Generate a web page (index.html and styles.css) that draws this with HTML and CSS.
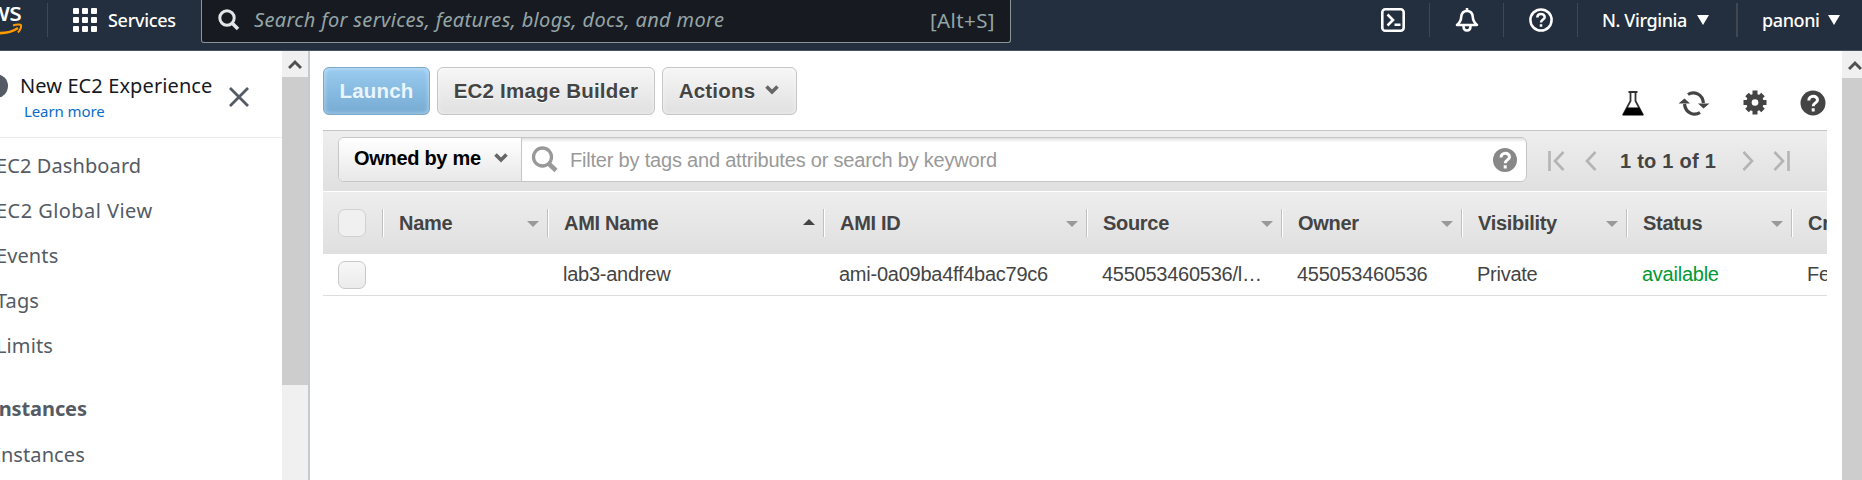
FILE: index.html
```html
<!DOCTYPE html>
<html lang="en">
<head>
<meta charset="utf-8">
<title>EC2 Management Console</title>
<link rel="stylesheet" href="styles.css">
</head>
<body>
<header class="topbar">
  <div class="logo">
    <span class="logo-text">aws</span>
    <svg class="logo-smile" width="44" height="14" viewBox="0 0 44 14"><path d="M0 4C12 12 29 12 39 5" fill="none" stroke="#f90" stroke-width="2.6"/><path d="M34 2.5C38 1 41.500 1.500 42 2.200C42.500 3.500 41.500 7 39 9.500" fill="none" stroke="#f90" stroke-width="2"/></svg>
  </div>
  <div class="services">
    <svg width="24" height="24" viewBox="0 0 24 24" fill="#fff"><rect width="6" height="6" rx="1"/><rect x="9" width="6" height="6" rx="1"/><rect x="18" width="6" height="6" rx="1"/><rect y="9" width="6" height="6" rx="1"/><rect x="9" y="9" width="6" height="6" rx="1"/><rect x="18" y="9" width="6" height="6" rx="1"/><rect y="18" width="6" height="6" rx="1"/><rect x="9" y="18" width="6" height="6" rx="1"/><rect x="18" y="18" width="6" height="6" rx="1"/></svg>
    <span class="services-label">Services</span>
  </div>
  <div class="search">
    <svg width="22" height="22" viewBox="0 0 22 22" fill="none" stroke="#e3e6e6" stroke-width="3"><circle cx="9" cy="9" r="7.200"/><path d="M14 14L20 20" stroke-width="3.600"/></svg>
    <span class="search-hint">Search for services, features, blogs, docs, and more</span>
    <span class="search-key">[Alt+S]</span>
  </div>
  <nav class="tools">
    <span class="tool"><svg width="24" height="24" viewBox="0 0 24 24" fill="none" stroke="#fff" stroke-width="2.600"><rect x="1.300" y="1.300" width="21.400" height="21.400" rx="3"/><path d="M6.500 6.500L12 12L6.500 17.500M13.500 16.800H19.500"/></svg></span>
    <span class="tool"><svg width="24" height="24" viewBox="0 0 24 24" fill="none" stroke="#fff" stroke-width="2.600"><path d="M12 0V3M2 17C5 14.500 6 13 6.200 9C6.500 5 8.500 3 12 3C15.500 3 17.500 5 17.800 9C18 13 19 14.500 22 17Z" stroke-linejoin="round"/><path d="M8.500 18C8.500 24 15.500 24 15.500 18"/></svg></span>
    <span class="tool"><svg width="24" height="24" viewBox="0 0 24 24" fill="none" stroke="#fff" stroke-width="2.500"><circle cx="12" cy="12" r="10.600"/><path d="M8.300 9.500C8.300 4.800 15.700 4.800 15.700 9.200C15.700 11.500 12 11.600 12 14.500M12 16.300V18.800"/></svg></span>
    <span class="menu region"><span class="menu-text region-text">N. Virginia</span><svg width="12" height="10"><path d="M0 0H12L6 10Z" fill="#fff"/></svg></span>
    <span class="menu user"><span class="menu-text user-text">panoni</span><svg width="12" height="10"><path d="M0 0H12L6 10Z" fill="#fff"/></svg></span>
  </nav>
</header>
<div class="workspace">
  <aside class="sidebar">
    <div class="experience">
      <span class="toggle"></span>
      <div class="experience-text"><div class="experience-title">New EC2 Experience</div><a class="learn">Learn more</a></div>
      <svg class="close" width="20" height="20" viewBox="0 0 20 20" stroke="#545b64" stroke-width="2.800"><path d="M1 1L19 19M19 1L1 19"/></svg>
    </div>
    <ul class="nav">
      <li>EC2 Dashboard</li>
      <li class="nav-wide">EC2 Global View</li>
      <li>Events</li>
      <li>Tags</li>
      <li>Limits</li>
      <li class="nav-group">Instances</li>
      <li class="nav-sub">Instances</li>
    </ul>
  </aside>
  <div class="scroll side-scroll">
    <div class="scroll-button"><svg width="14" height="11" viewBox="0 0 14 11"><path d="M1 9L7 3L13 9" fill="none" stroke="#505050" stroke-width="3"/></svg></div>
    <div class="scroll-thumb"></div>
  </div>
  <main class="main">
    <div class="actions">
      <button class="button primary">Launch</button>
      <button class="button builder">EC2 Image Builder</button>
      <button class="button dropdown">Actions <svg width="14" height="10" viewBox="0 0 14 10"><path d="M1.500 1.500L7 7L12.500 1.500" fill="none" stroke="#666" stroke-width="3.600"/></svg></button>
      <div class="utilities">
        <svg width="24" height="26" viewBox="0 0 24 26"><path d="M7.500 2H16.500M9.500 2V11L2.500 24H21.500L14.500 11V2" fill="none" stroke="#333" stroke-width="1.800"/><path d="M6 17.500H18L22.500 25.500H1.500Z"/></svg>
        <svg width="32" height="26" viewBox="0 0 32 26" fill="none" stroke="#444" stroke-width="3.200"><path d="M10 4.500C16 .500 24.500 4 25.500 13M22 22.500C16 26.500 7.500 23 6.500 14"/><path d="M20 13.500H31.500L25.500 18.500ZM.500 13.500H12L6.500 8.500Z" fill="#444" stroke="none"/></svg>
        <svg width="24" height="26" viewBox="0 0 24 26"><g stroke="#444" stroke-width="5"><path d="M12 .500V24.500M.500 12.500H23.500M4 4.500L20 20.500M20 4.500L4 20.500"/></g><circle cx="12" cy="12.500" r="8.700" fill="#444"/><circle cx="12" cy="12.500" r="3.300" fill="#fff"/></svg>
        <svg width="26" height="26" viewBox="0 0 26 26"><circle cx="13" cy="13" r="12.500" fill="#444"/><path d="M8.800 10.500C8.800 5 17.500 5 17.500 10C17.500 13 13.200 12.800 13.200 16.200M13.200 18.200V21.400" fill="none" stroke="#fff" stroke-width="3"/></svg>
      </div>
    </div>
    <section class="panel">
      <div class="filterbar">
        <div class="filter">
          <div class="owner-filter"><span class="owned">Owned by me</span><svg width="14" height="10" viewBox="0 0 14 10"><path d="M1.500 1.500L7 7L12.500 1.500" fill="none" stroke="#666" stroke-width="3.600"/></svg></div>
          <div class="keyword">
            <svg width="28" height="28" viewBox="0 0 28 28" fill="none" stroke="#999"><circle cx="11.500" cy="11" r="9" stroke-width="3.300"/><path d="M17.500 17.500L25 24.500" stroke-width="4.500"/></svg>
            <span class="keyword-hint">Filter by tags and attributes or search by keyword</span>
            <svg class="keyword-help" width="24" height="26" viewBox="0 0 24 26"><circle cx="12" cy="13" r="12" fill="#888"/><path d="M8 10.500C8 5 16.500 5 16.500 10C16.500 13 12.200 12.800 12.200 16.200M12.200 18.200V21.400" fill="none" stroke="#fff" stroke-width="3"/></svg>
          </div>
        </div>
        <div class="pager">
          <svg width="17" height="20" viewBox="0 0 17 20"><path d="M1.500 0V20M15.500 1L7 10L15.500 19"/></svg>
          <svg class="prev" width="12" height="20" viewBox="0 0 12 20"><path d="M10.500 1L2 10L10.500 19"/></svg>
          <span class="count">1 to 1 of 1</span>
          <svg width="12" height="20" viewBox="0 0 12 20"><path d="M1.500 1L10 10L1.500 19"/></svg>
          <svg class="last" width="17" height="20" viewBox="0 0 17 20"><path d="M15.500 0V20M1.500 1L10 10L1.500 19"/></svg>
        </div>
      </div>
      <div class="grid head">
        <div class="check-cell"><span class="check check-all"></span></div>
        <div class="th">Name<i class="sort"></i></div>
        <div class="th">AMI Name<i class="sort up"></i></div>
        <div class="th">AMI ID<i class="sort"></i></div>
        <div class="th">Source<i class="sort"></i></div>
        <div class="th">Owner<i class="sort"></i></div>
        <div class="th">Visibility<i class="sort"></i></div>
        <div class="th">Status<i class="sort"></i></div>
        <div class="th">Creation Date</div>
      </div>
      <div class="grid row">
        <div class="check-cell"><span class="check"></span></div>
        <div class="td"></div>
        <div class="td">lab3-andrew</div>
        <div class="td">ami-0a09ba4ff4bac79c6</div>
        <div class="td">455053460536/l…</div>
        <div class="td">455053460536</div>
        <div class="td">Private</div>
        <div class="td ok">available</div>
        <div class="td">February</div>
      </div>
    </section>
  </main>
  <div class="scroll page-scroll">
    <div class="scroll-button"><svg width="14" height="11" viewBox="0 0 14 11"><path d="M1 9L7 3L13 9" fill="none" stroke="#505050" stroke-width="3"/></svg></div>
    <div class="scroll-thumb"></div>
  </div>
</div>
</body>
</html>
```
FILE: styles.css
```css
* { box-sizing: border-box; }
body { margin: 0; width: 1862px; height: 480px; overflow: hidden; background: #fff; font-family: "Liberation Sans", Arial, sans-serif; }
svg { display: block; flex: none; }

.topbar { display: flex; height: 51px; background: #232f3e; border-bottom: 1px solid #485362; font-family: "Noto Sans", sans-serif; color: #fff; }
.logo { width: 48px; height: 34px; margin-top: 3px; border-right: 1px solid #414750; overflow: hidden; }
.logo-text { display: block; margin-left: -25px; font-size: 26px; font-weight: 500; line-height: 34px; margin-top: -9px; letter-spacing: -0.8px; }
.logo-smile { margin: -5px 0 0 -21px; }
.services { display: flex; align-items: center; height: 40px; width: 153px; padding-left: 25px; }
.services-label { margin: -1px 0 0 11px; font-size: 18px; font-weight: 500; letter-spacing: -0.3px; }
.search { display: flex; align-items: center; width: 810px; height: 43px; padding: 0 15px 3px 16px; background: #171a21; border: 1px solid #869596; border-top: 0; border-radius: 0 0 3px 3px; color: #95a5a6; }
.search-hint { margin-left: 14px; font-size: 20px; font-style: italic; letter-spacing: 0.34px; white-space: nowrap; }
.search-key { margin-left: auto; font-size: 20.5px; letter-spacing: 0.4px; }
.tools { display: flex; height: 34px; margin: 3px 0 0 auto; }
.tool { display: flex; width: 74px; align-items: center; justify-content: center; border-right: 1px solid #414750; }
.menu { display: flex; align-items: center; border-right: 1px solid #414750; }
.menu-text { font-size: 18px; font-weight: 500; white-space: nowrap; }
.region { width: 160px; padding-left: 24px; border-right-width: 2px; }
.region-text { width: 95px; letter-spacing: -0.4px; }
.user { width: 124px; padding-left: 24px; border: 0; }
.user-text { width: 66px; letter-spacing: -0.4px; }

.workspace { display: flex; height: 429px; }
.sidebar { width: 282px; overflow: hidden; font-family: "Noto Sans", sans-serif; color: #545b64; }
.experience { display: flex; height: 87px; border-bottom: 1px solid #eaeded; }
.toggle { width: 24px; height: 24px; margin: 23px 0 0 -16px; border-radius: 12px; background: #545b64; }
.experience-text { width: 208px; padding: 20px 0 0 12px; white-space: nowrap; }
.experience-title { font-size: 20px; line-height: 30px; letter-spacing: 0.1px; color: #16191f; }
.learn { display: block; margin: -2px 0 0 4px; font-size: 15px; line-height: 24px; letter-spacing: -0.1px; color: #0a6cc8; }
.close { margin: 36px 0 0 13px; }
.nav { list-style: none; margin: 5px 0 0 -4px; padding: 0; font-size: 20px; line-height: 45px; letter-spacing: 0.1px; white-space: nowrap; }
.nav-wide { letter-spacing: 0.45px; }
.nav-group { margin: 18px 0 0 -5px; font-weight: 700; letter-spacing: -0.1px; }
.nav-sub { margin: 1px 0 0 -2px; }

.scroll { background: #f0f0f0; }
.scroll-button { display: flex; align-items: center; justify-content: center; height: 26px; background: #f0f0f0; }
.scroll-thumb { background: #cdcdcd; }
.side-scroll { width: 28px; border-right: 2px solid #c5cbd0; }
.side-scroll .scroll-thumb { height: 308px; }
.page-scroll { width: 20px; overflow: hidden; padding-top: 1px; }
.page-scroll .scroll-button { width: 26px; }
.page-scroll .scroll-thumb { height: 402px; }

.main { width: 1532px; padding: 16px 15px 0 13px; }
.actions { display: flex; height: 63px; }
.button { display: flex; align-items: center; justify-content: center; height: 48px; margin: 0 7px 0 0; padding: 0; border: 1px solid #c6c6c6; border-radius: 6px; background: linear-gradient(#f6f6f6, #e0e0e0); box-shadow: inset 0 0 5px #fff8; font: bold 20.5px "Liberation Sans", Arial, sans-serif; letter-spacing: 0.2px; color: #444; text-shadow: 0 1px #fff; white-space: nowrap; }
.primary { width: 107px; border-color: #79a9ce; background: linear-gradient(#9acbef, #76abd3); color: #eaf5fd; text-shadow: none; }
.builder { width: 218px; }
.dropdown { width: 135px; gap: 10px; padding-right: 1px; }
.dropdown svg { margin-top: -3px; }
.utilities { display: flex; margin: 23px 1px 0 auto; }
.utilities svg:nth-child(2) { margin-left: 33px; }
.utilities svg:nth-child(3) { margin-left: 33px; }
.utilities svg:nth-child(4) { margin-left: 33px; }

.panel { border-top: 1px solid #c5c5c5; overflow: hidden; color: #444; }
.filterbar { display: flex; height: 61px; padding: 6px 0 0 15px; background: linear-gradient(#eee, #e0e0e0); border-bottom: 1px solid #fff; }
.filter { display: flex; width: 1189px; height: 45px; border: 1px solid #c6c6c6; border-radius: 6px; overflow: hidden; background: #fff; }
.owner-filter { display: flex; align-items: center; width: 183px; padding: 0 0 3px 15px; border-right: 1px solid #c6c6c6; background: linear-gradient(#fff, #e8e8e8); color: #000; }
.owned { width: 140px; font-size: 20px; font-weight: bold; letter-spacing: -0.3px; }
.keyword { display: flex; align-items: center; flex: 1; padding: 0 9px 0 9px; box-shadow: inset 0 4px 4px -3px #ccc; }
.keyword-hint { margin: 1px 0 0 11px; font-size: 20px; color: #999; letter-spacing: -0.2px; }
.keyword-help { margin-left: auto; }
.pager { display: flex; height: 48px; align-items: center; padding-left: 21px; fill: none; stroke: #b4b4b4; stroke-width: 2.6px; }
.prev { margin-left: 20px; }
.count { width: 122px; margin-left: 23px; font-size: 20px; font-weight: bold; letter-spacing: 0.25px; }
.last { margin-left: 19px; }

.grid { display: grid; grid-template-columns: 59px 165px 276px 263px 195px 180px 165px 165px 165px; width: 1633px; align-items: center; }
.head { height: 62px; background: linear-gradient(#eee, #dfdfdf); font-size: 20px; font-weight: bold; letter-spacing: -0.3px; }
.th { display: flex; align-items: center; justify-content: space-between; height: 28px; padding: 0 8px 0 16px; border-left: 1px solid #c0c0c0; box-shadow: inset 1px 0 #fff; }
.sort { margin-top: 2px; border: 6px solid transparent; border-top-color: #999; border-bottom: 0; }
.sort.up { margin-top: -3px; border-top: 0; border-bottom: 6px solid #444; }
.row { height: 42px; border-bottom: 1px solid #ddd; font-size: 20px; letter-spacing: -0.25px; }
.td { padding-left: 16px; white-space: nowrap; }
.ok { color: #093; }
.check-cell { padding-left: 15px; }
.check { display: block; width: 28px; height: 28px; border: 1px solid #c8c8c8; border-radius: 7px; background: linear-gradient(#f7f7f7, #ebebeb); }
.check-all { border-color: #d0d0d0; background: #f0f0f0; }
```
